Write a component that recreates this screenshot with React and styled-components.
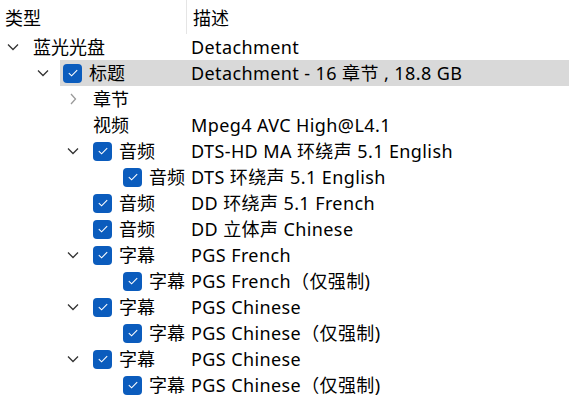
import React from "react";
import styled, { createGlobalStyle } from "styled-components";

const Global = createGlobalStyle`
  html, body { margin: 0; padding: 0; background: #ffffff; }
  body {
    font-family: "Noto Sans", "Noto Sans CJK SC", sans-serif;
    color: #000;
    overflow: hidden;
  }
`;

const Tree = styled.div`
  width: 569px;
  height: 399px;
  background: #fff;
  font-size: 18px;
`;

const Header = styled.div`
  display: grid;
  grid-template-columns: 187px 1fr;
  height: 34px;
`;

const HeaderCell = styled.div`
  display: flex;
  align-items: center;
  padding-left: ${(p) => (p.$first ? 5 : 6)}px;
  padding-bottom: 1px;
  border-right: ${(p) => (p.$first ? "1px solid #e5e5e5" : "none")};
  height: 34px;
  box-sizing: border-box;
`;

const Row = styled.div`
  display: grid;
  grid-template-columns: 191px 1fr;
  height: 26px;
  align-items: center;
  position: relative;
`;

const TypeCell = styled.div`
  display: flex;
  align-items: center;
  height: 26px;
  padding-left: ${(p) => 3 + p.$level * 30}px;
  white-space: nowrap;
`;

const ExpSlot = styled.div`
  width: 20px;
  height: 26px;
  display: flex;
  align-items: center;
  justify-content: center;
  flex: none;
  margin-right: 7px;
`;

const Item = styled.div`
  display: flex;
  align-items: center;
  height: 26px;
  padding-left: 3px;
  gap: 7px;
  position: relative;
  z-index: 1;
`;

const Highlight = styled.div`
  position: absolute;
  top: 0;
  bottom: 0;
  left: ${(p) => p.$left}px;
  right: 0;
  background: #d9d9d9;
`;

const Box = styled.span`
  width: 19px;
  height: 19px;
  border-radius: 4px;
  background: #0b5cbd;
  display: inline-flex;
  align-items: center;
  justify-content: center;
  flex: none;
`;

const Label = styled.span`
  line-height: 26px;
`;

const Desc = styled.div`
  white-space: nowrap;
  line-height: 26px;
  letter-spacing: 0.4px;
  position: relative;
  z-index: 1;
`;

const Down = () => (
  <svg width="12" height="8" viewBox="0 0 12 8">
    <path d="M1 1.5 L6 6.5 L11 1.5" fill="none" stroke="#333" strokeWidth="1.3" />
  </svg>
);

const Right = () => (
  <svg width="8" height="12" viewBox="0 0 8 12">
    <path d="M2 1 L6.5 6 L2 11" fill="none" stroke="#9a9a9a" strokeWidth="1.3" />
  </svg>
);

const Check = () => (
  <svg width="12" height="10" viewBox="0 0 12 10">
    <path d="M1.8 5.2 L4.6 7.8 L10.2 2.2" fill="none" stroke="#fff" strokeWidth="1.1" />
  </svg>
);

const rows = [
  { level: 0, exp: "down", label: "蓝光光盘", desc: "Detachment" },
  { level: 1, exp: "down", check: true, label: "标题", desc: "Detachment - 16 章节 , 18.8 GB", selected: true },
  { level: 2, exp: "right", label: "章节", desc: "" },
  { level: 2, label: "视频", desc: "Mpeg4 AVC High@L4.1" },
  { level: 2, exp: "down", check: true, label: "音频", desc: "DTS-HD MA 环绕声 5.1 English" },
  { level: 3, check: true, label: "音频", desc: "DTS 环绕声 5.1 English" },
  { level: 2, check: true, label: "音频", desc: "DD 环绕声 5.1 French" },
  { level: 2, check: true, label: "音频", desc: "DD 立体声 Chinese" },
  { level: 2, exp: "down", check: true, label: "字幕", desc: "PGS French" },
  { level: 3, check: true, label: "字幕", desc: "PGS French（仅强制)" },
  { level: 2, exp: "down", check: true, label: "字幕", desc: "PGS Chinese" },
  { level: 3, check: true, label: "字幕", desc: "PGS Chinese（仅强制)" },
  { level: 2, exp: "down", check: true, label: "字幕", desc: "PGS Chinese" },
  { level: 3, check: true, label: "字幕", desc: "PGS Chinese（仅强制)" },
];

export default function App() {
  return (
    <>
      <Global />
      <Tree>
        <Header>
          <HeaderCell $first>类型</HeaderCell>
          <HeaderCell>描述</HeaderCell>
        </Header>
        {rows.map((r, i) => (
          <Row key={i}>
            {r.selected && <Highlight $left={3 + r.level * 30 + 27} />}
            <TypeCell $level={r.level}>
              <ExpSlot>
                {r.exp === "down" && <Down />}
                {r.exp === "right" && <Right />}
              </ExpSlot>
              <Item>
                {r.check && (
                  <Box>
                    <Check />
                  </Box>
                )}
                <Label>{r.label}</Label>
              </Item>
            </TypeCell>
            <Desc>{r.desc}</Desc>
          </Row>
        ))}
      </Tree>
    </>
  );
}
